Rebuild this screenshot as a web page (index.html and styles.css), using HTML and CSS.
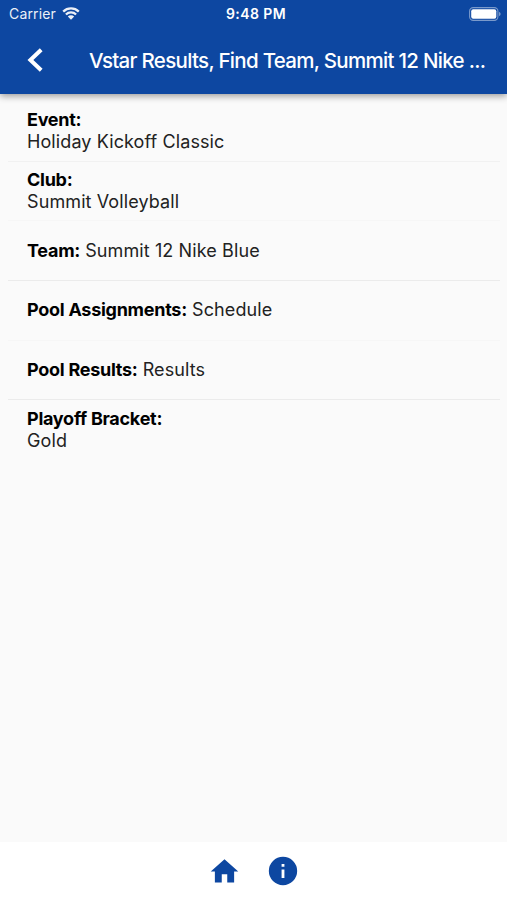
FILE: index.html
```html
<!DOCTYPE html>
<html lang="en">
<head>
  <meta charset="UTF-8">
  <meta name="viewport" content="width=device-width, initial-scale=1">
  <title>Vstar Results</title>
  <link rel="stylesheet" href="styles.css">
</head>
<body>

  <header>
    <div class="status">
      <div class="carrier">
        <span>Carrier</span>
        <svg class="wifi" viewBox="0 0 18 13">
          <path d="M1.2 4.6a11.2 11.2 0 0 1 15.6 0M3.9 7.5a7.3 7.3 0 0 1 10.2 0" fill="none" stroke="#fff" stroke-width="2.3"/>
          <path d="M9 12.8L5.8 9.6a4.6 4.6 0 0 1 6.4 0z" fill="#fff"/>
        </svg>
      </div>
      <span class="time">9:48 PM</span>
      <div class="power">
        <svg class="battery" viewBox="0 0 32 14">
          <rect x=".6" y=".6" width="28.3" height="12.8" rx="3.6" fill="none" stroke="#fff" stroke-opacity=".45" stroke-width="1.1"/>
          <rect x="2.2" y="2.2" width="25.1" height="9.6" rx="2" fill="#fff"/>
          <path d="M30.2 4.8c1.8.7 1.8 3.7 0 4.4z" fill="#fff" fill-opacity=".55"/>
        </svg>
      </div>
    </div>
    <div class="navbar">
      <svg class="back" viewBox="0 0 16 24">
        <path d="M14.2 1.8L3.4 12l10.8 10.2" fill="none" stroke="#fff" stroke-width="4"/>
      </svg>
      <h1>Vstar Results, Find Team, Summit 12 Nike ...</h1>
    </div>
  </header>

  <main>
    <div class="row"><p><b>Event:</b><br>Holiday Kickoff Classic</p></div>
    <div class="row light"><p><b>Club:</b><br>Summit Volleyball</p></div>
    <div class="row"><p><b>Team:</b> Summit 12 Nike Blue</p></div>
    <div class="row light"><p><b>Pool Assignments:</b> Schedule</p></div>
    <div class="row"><p><b>Pool Results:</b> Results</p></div>
    <div class="row last"><p><b>Playoff Bracket:</b><br>Gold</p></div>
  </main>

  <footer>
    <svg class="home" viewBox="0 0 24 24"><path d="M10 20v-6h4v6h5v-8h3L12 3 2 12h3v8z"/></svg>
    <svg class="info" viewBox="0 0 24 24"><path d="M12 2a10 10 0 1 0 0 20 10 10 0 0 0 0-20zm1 15h-2v-6h2zm0-8h-2V7h2z"/></svg>
  </footer>

</body>
</html>
```
FILE: styles.css
```css
* { margin:0; padding:0; box-sizing:border-box; }
body {
  display:flex; flex-direction:column; height:900px;
  font-family:Inter, "Liberation Sans", sans-serif;
  background:#fafafa; color:#222; overflow:hidden;
}
svg { display:block; }
header {
  height:94px; background:#0d47a1; color:#fff;
  box-shadow:0 2px 7px rgba(0,0,0,0.4);
}
.status {
  display:flex; align-items:center;
  height:27px; padding:0 6px 0 9px;
  font-size:14px;
}
.carrier { display:flex; align-items:center; gap:6px; flex:1; letter-spacing:0.15px; opacity:0.92; }
.wifi { width:18px; height:13px; }
.time { padding-left:2px; font-size:14px; font-weight:600; letter-spacing:0.4px; }
.power { display:flex; justify-content:flex-end; flex:1; }
.battery { width:32px; height:14px; }
.navbar { display:flex; align-items:center; height:66px; padding-left:27px; }
.back { width:16px; height:24px; }
.navbar h1 {
  margin-left:46px; font-size:20.5px; font-weight:500;
  letter-spacing:-0.7px; white-space:nowrap;
}
main { flex:1; padding:8px 7px 0 8px; }
.row {
  display:flex; align-items:center;
  height:59.7px; padding:0 19px;
  border-bottom:1px solid #ebebeb;
}
.row:first-child { border-color:#f1f1f1; }
.row.light { border-color:#f6f6f6; }
.row.last { border:none; }
.row p { font-size:18px; line-height:22px; letter-spacing:0.1px; }
.row b { color:#000; font-weight:700; letter-spacing:-0.27px; }
footer {
  display:flex; align-items:center; justify-content:center; gap:25px;
  height:58px; background:#fff; fill:#0d47a1;
}
.home { width:33px; height:33px; }
.info { width:34px; height:34px; }
```
